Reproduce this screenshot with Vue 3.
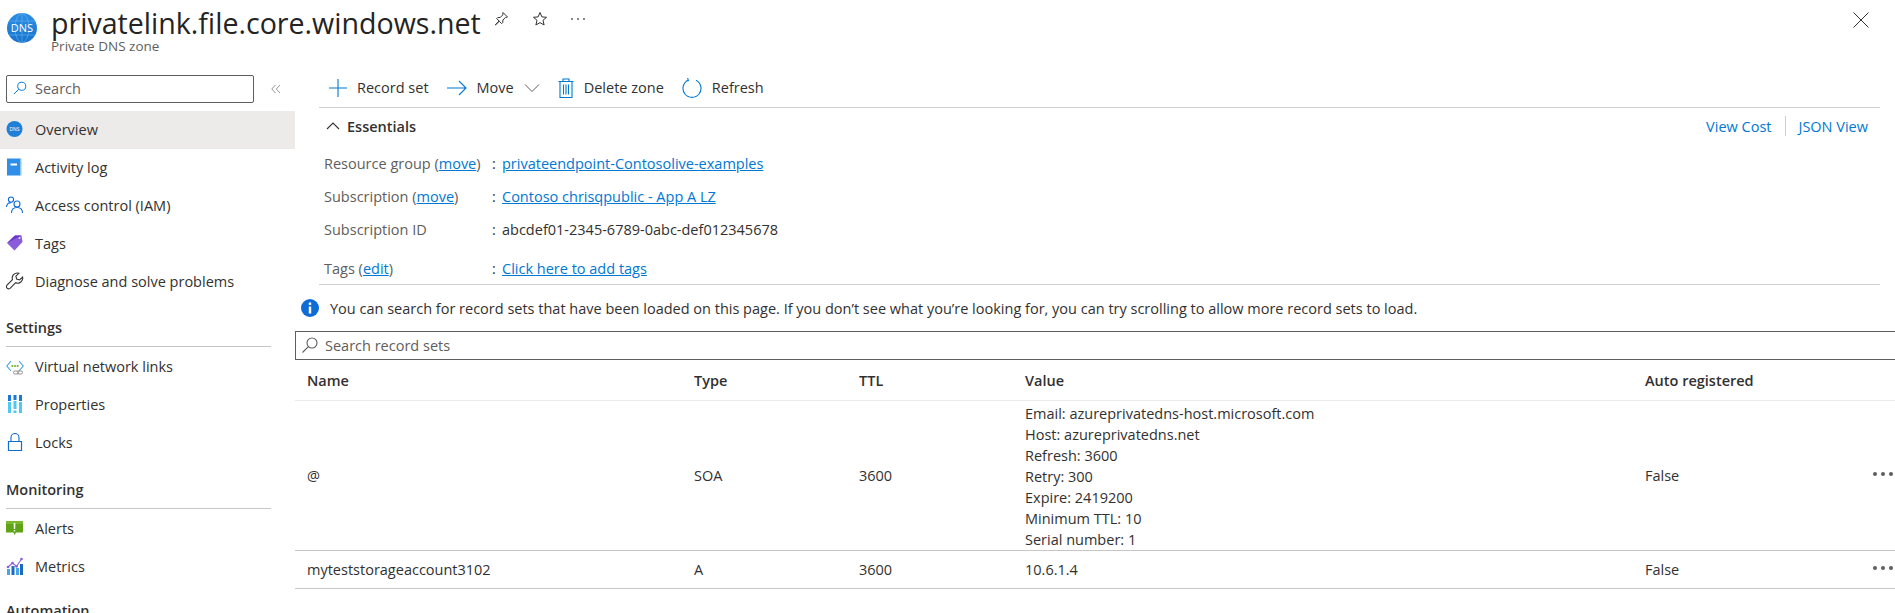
<script setup>
const sections = [
  {
    items: [
      { label: 'Overview', icon: 'dns', active: true },
      { label: 'Activity log', icon: 'log' },
      { label: 'Access control (IAM)', icon: 'iam' },
      { label: 'Tags', icon: 'tag' },
      { label: 'Diagnose and solve problems', icon: 'wrench' },
    ],
  },
  {
    title: 'Settings',
    items: [
      { label: 'Virtual network links', icon: 'vnet' },
      { label: 'Properties', icon: 'props' },
      { label: 'Locks', icon: 'lock' },
    ],
  },
  {
    title: 'Monitoring',
    items: [
      { label: 'Alerts', icon: 'alert' },
      { label: 'Metrics', icon: 'metrics' },
    ],
  },
  { title: 'Automation', items: [] },
];

const essentials = [
  { label: 'Resource group', action: 'move', value: 'privateendpoint-Contosolive-examples', link: true },
  { label: 'Subscription', action: 'move', value: 'Contoso chrisqpublic - App A LZ', link: true },
  { label: 'Subscription ID', value: 'abcdef01-2345-6789-0abc-def012345678' },
  { label: 'Tags', action: 'edit', value: 'Click here to add tags', link: true, tall: true },
];

const records = [
  {
    name: '@',
    type: 'SOA',
    ttl: '3600',
    value: [
      'Email: azureprivatedns-host.microsoft.com',
      'Host: azureprivatedns.net',
      'Refresh: 3600',
      'Retry: 300',
      'Expire: 2419200',
      'Minimum TTL: 10',
      'Serial number: 1',
    ],
    auto: 'False',
  },
  { name: 'myteststorageaccount3102', type: 'A', ttl: '3600', value: ['10.6.1.4'], auto: 'False' },
];
</script>

<template>
  <div class="page">
    <header class="header">
      <svg class="zone-icon" viewBox="0 0 30 30" width="30" height="30">
        <defs>
          <linearGradient id="globe" x1="0" y1="0" x2="0" y2="1">
            <stop offset="0" stop-color="#2b8fe6" />
            <stop offset="1" stop-color="#1673cc" />
          </linearGradient>
        </defs>
        <circle cx="15" cy="15" r="15" fill="url(#globe)" />
        <g fill="none" stroke="#6db4ee" stroke-width="0.6">
          <ellipse cx="15" cy="15" rx="7" ry="14.5" />
          <path d="M2 8h26M2 22h26M15 0.5v29" />
        </g>
        <text x="15" y="19" text-anchor="middle" class="zone-text">DNS</text>
      </svg>
      <div class="heading">
        <h1>privatelink.file.core.windows.net</h1>
        <div class="subtitle">Private DNS zone</div>
      </div>
      <div class="header-actions">
        <svg viewBox="0 0 16 16" width="16" height="16" fill="none" stroke="#323130" stroke-width="1">
          <path d="M10 1.5l4.5 4.5-1 .6-1-.2-2.6 2.6-.2 2.6-1 1-2.4-2.4-4 3.8 3.8-4-2.4-2.4 1-1 2.6-.2 2.6-2.6-.2-1z" />
        </svg>
        <svg viewBox="0 0 16 16" width="16" height="16" fill="none" stroke="#323130" stroke-width="1">
          <path d="M8 1.5l1.9 4.4 4.6.4-3.5 3 1.1 4.7L8 11.6l-4.1 2.4L5 9.3l-3.5-3 4.6-.4z" />
        </svg>
        <span class="dots"><b></b><b></b><b></b></span>
      </div>
      <svg class="close" viewBox="0 0 16 16" width="16" height="16" stroke="#323130" stroke-width="1">
        <path d="M0.5 0.5l15 15M15.5 0.5l-15 15" />
      </svg>
    </header>

    <div class="body">
      <aside class="sidebar">
        <div class="search-row">
          <div class="side-search">
            <svg viewBox="0 0 16 16" width="14" height="14" fill="none" stroke="#0078d4" stroke-width="1.1">
              <circle cx="10" cy="6" r="4.6" />
              <path d="M6.6 9.4L1 15" />
            </svg>
            <span>Search</span>
          </div>
          <svg class="collapse" viewBox="0 0 10 10" width="10" height="10" fill="none" stroke="#8a8886" stroke-width="0.9">
            <path d="M4.5 1L0.8 5l3.7 4M9 1L5.3 5 9 9" />
          </svg>
        </div>

        <section v-for="(section, i) in sections" :key="i" class="side-section">
          <div v-if="section.title" class="side-title">{{ section.title }}</div>
          <div
            v-for="item in section.items"
            :key="item.label"
            class="side-item"
            :class="{ active: item.active, titled: section.title }"
          >
            <span class="side-icon">
              <svg viewBox="0 0 18 18" width="18" height="18">
                <template v-if="item.icon === 'dns'">
                  <circle cx="8.5" cy="9" r="8" fill="#1f80d8" />
                  <text x="8.5" y="11" text-anchor="middle" class="mini-text">DNS</text>
                </template>
                <template v-else-if="item.icon === 'log'">
                  <path d="M1 0.5h13.5v17H1z" fill="#2f8fe8" />
                  <path d="M14 0.5h1.5v17H14z" fill="#8cc8f4" />
                  <path d="M4.5 5.5h6.5v2H4.5z" fill="#fff" />
                </template>
                <template v-else-if="item.icon === 'iam'">
                  <g fill="none" stroke="#0f6cd6" stroke-width="1.1">
                    <circle cx="5" cy="3.6" r="2.6" />
                    <path d="M0.5 11c0-2.6 1.8-4.4 4.5-4.4" />
                    <circle cx="11" cy="8" r="3" />
                    <path d="M5.5 17c0-3.3 2.2-5.5 5.5-5.5s5.5 2.2 5.5 5.5" />
                  </g>
                </template>
                <template v-else-if="item.icon === 'tag'">
                  <path d="M1 9l8-7.5h6.5l1 6.5-8 8.5z" fill="#8a5ed8" />
                  <path d="M1 9l8-7.5h6.5z" fill="#6a35c8" />
                  <circle cx="13.5" cy="4" r="1" fill="#e4d8f8" />
                </template>
                <template v-else-if="item.icon === 'wrench'">
                  <path
                    d="M11 1a5 5 0 0 0-4.5 6.6L1 13.2a2.2 2.2 0 0 0 3.1 3.1l5.6-5.6A5 5 0 0 0 16.6 5l-3 3-3-.9-.7-2.9 3-2.9A5 5 0 0 0 11 1z"
                    fill="none"
                    stroke="#323130"
                    stroke-width="1.1"
                  />
                </template>
                <template v-else-if="item.icon === 'vnet'">
                  <path d="M5 4L0.8 9 5 14M13 4l4.2 5-4.2 5" fill="none" stroke="#3f9fe0" stroke-width="1.1" />
                  <path d="M5.5 9h1.8M8.1 9h1.8M10.7 9h1.8" stroke="#57a300" stroke-width="1.6" />
                  <rect x="7.5" y="14" width="5" height="3" rx="1.4" fill="none" stroke="#8a8886" stroke-width="0.9" />
                  <rect x="11.5" y="14" width="5" height="3" rx="1.4" fill="none" stroke="#8a8886" stroke-width="0.9" />
                </template>
                <template v-else-if="item.icon === 'props'">
                  <path d="M2 0h3v6H2zM7.5 0h3v5h-3zM13 0h3v6h-3z" fill="#1b78d4" />
                  <path d="M2 7h3v11H2zM7.5 6h3v8h-3zM7.5 15.5h3V18h-3zM13 7h3v11h-3z" fill="#50c8f0" />
                </template>
                <template v-else-if="item.icon === 'lock'">
                  <path d="M2.5 8.5h13v9h-13z" fill="none" stroke="#0f6cd6" stroke-width="1.2" />
                  <path d="M5 8.5V4.5a4 4 0 0 1 8 0v4" fill="none" stroke="#0f6cd6" stroke-width="1.1" />
                </template>
                <template v-else-if="item.icon === 'alert'">
                  <path d="M0 2h17v11.5h-7L8.5 16 7.5 13.5H0z" fill="#5ea318" />
                  <path d="M0 2h17v3H0z" fill="#7ab82e" />
                  <path d="M7.6 4h1.8l-.2 6H7.8zM7.8 11h1.4v1.5H7.8z" fill="#f4f8e8" />
                </template>
                <template v-else>
                  <path d="M1 12h3v6H1zM10 11h3v7h-3z" fill="#4aa4e8" />
                  <path d="M5.5 9h3v9h-3zM14 7h3v11h-3z" fill="#1b6cc0" />
                  <path d="M2 10l4.5-4 4 3.5L15.5 2" fill="none" stroke="#8a5ed8" stroke-width="1.1" />
                  <g fill="#8a5ed8">
                    <circle cx="2" cy="10" r="1.3" />
                    <circle cx="6.5" cy="6" r="1.3" />
                    <circle cx="10.5" cy="9.5" r="1.3" />
                    <circle cx="15.5" cy="2" r="1.3" />
                  </g>
                </template>
              </svg>
            </span>
            <span>{{ item.label }}</span>
          </div>
        </section>
      </aside>

      <main class="main">
        <div class="toolbar">
          <div class="tool">
            <svg viewBox="0 0 18 18" width="18" height="18" stroke="#0078d4" stroke-width="1.1"><path d="M9 0v18M0 9h18" /></svg>
            <span>Record set</span>
          </div>
          <div class="tool">
            <svg viewBox="0 0 20 18" width="20" height="18" fill="none" stroke="#0078d4" stroke-width="1.1"><path d="M0 9h19M12 2l7 7-7 7" /></svg>
            <span>Move</span>
            <svg viewBox="0 0 16 10" width="16" height="10" fill="none" stroke="#605e5c"><path d="M1 1.5l7 7 7-7" /></svg>
          </div>
          <div class="tool">
            <svg viewBox="0 0 16 20" width="16" height="20" fill="none" stroke="#0078d4" stroke-width="1.1"><path d="M0.5 3.5h15M5 3.5V1h6v2.5M2 3.5h12v16H2zM5.5 6.5v10M8 6.5v10M10.5 6.5v10" /></svg>
            <span>Delete zone</span>
          </div>
          <div class="tool">
            <svg viewBox="0 0 20 20" width="20" height="20" fill="none" stroke="#0078d4" stroke-width="1.1"><path d="M6 2.3a9 9 0 1 0 8 0M5.6 0L6.4 2.6 3.6 3.2" /></svg>
            <span>Refresh</span>
          </div>
        </div>

        <div class="essentials-head">
          <div class="essentials-title">
            <svg viewBox="0 0 14 8" width="14" height="8" fill="none" stroke="#323130" stroke-width="1.1"><path d="M1 7l6-6 6 6" /></svg>
            <strong>Essentials</strong>
          </div>
          <div class="essentials-links">
            <a>View Cost</a>
            <i></i>
            <a>JSON View</a>
          </div>
        </div>

        <dl class="essentials">
          <div v-for="row in essentials" :key="row.label" class="ess-row" :class="{ tall: row.tall }">
            <dt>
              {{ row.label }}
              <template v-if="row.action">(<u>{{ row.action }}</u>)</template>
            </dt>
            <dd>
              <span class="colon">:</span>
              <u v-if="row.link">{{ row.value }}</u>
              <span v-else class="plain">{{ row.value }}</span>
            </dd>
          </div>
        </dl>

        <div class="info">
          <svg viewBox="0 0 18 18" width="18" height="18">
            <circle cx="9" cy="9" r="9" fill="#0f6cd6" />
            <path d="M7.8 3.6h2.4v2.4H7.8zM7.8 7.4h2.4v7H7.8z" fill="#fff" />
          </svg>
          <span>You can search for record sets that have been loaded on this page. If you don’t see what you’re looking for, you can try scrolling to allow more record sets to load.</span>
        </div>

        <div class="record-search">
          <svg viewBox="0 0 16 16" width="16" height="16" fill="none" stroke="#605e5c" stroke-width="1.1">
            <circle cx="10" cy="6" r="5" />
            <path d="M6.4 9.6L0.5 15.5" />
          </svg>
          <span>Search record sets</span>
        </div>

        <div class="table-row table-head">
          <div>Name</div>
          <div>Type</div>
          <div>TTL</div>
          <div>Value</div>
          <div>Auto registered</div>
          <div></div>
        </div>
        <div v-for="record in records" :key="record.name" class="table-row">
          <div>{{ record.name }}</div>
          <div>{{ record.type }}</div>
          <div>{{ record.ttl }}</div>
          <div :class="{ 'value-lines': record.value.length > 1 }">
            <div v-for="line in record.value" :key="line">{{ line }}</div>
          </div>
          <div>{{ record.auto }}</div>
          <div class="more"><b></b><b></b><b></b></div>
        </div>
      </main>
    </div>
  </div>
</template>

<style>
html,
body {
  margin: 0;
  background: #fff;
  overflow: hidden;
}
</style>

<style scoped>
.page {
  width: 1895px;
  height: 613px;
  overflow: hidden;
  font-family: "Open Sans", "Noto Sans", sans-serif;
  font-size: 14.5px;
  color: #323130;
}
.header {
  display: flex;
  align-items: flex-start;
  height: 68px;
  padding: 13px 26px 0 7px;
  box-sizing: border-box;
}
.zone-icon {
  flex: none;
}
.zone-text {
  font-size: 11px;
  fill: #fff;
}
.mini-text {
  font-size: 5px;
  fill: #fff;
}
.heading {
  margin: -6px 0 0 14px;
}
h1 {
  margin: 0;
  font-size: 28.6px;
  font-weight: 400;
  line-height: 32px;
  color: #252423;
}
.subtitle {
  font-size: 13.5px;
  line-height: 14px;
  color: #605e5c;
}
.header-actions {
  display: flex;
  align-items: center;
  gap: 23px;
  height: 16px;
  margin: -2px 0 0 12px;
}
.dots {
  display: flex;
  gap: 4px;
}
.dots b {
  width: 2px;
  height: 2px;
  border-radius: 50%;
  background: #605e5c;
}
.close {
  margin-left: auto;
  margin-top: -1px;
}
.body {
  display: flex;
}
.sidebar {
  flex: none;
  width: 295px;
}
.search-row {
  display: flex;
  align-items: flex-start;
  height: 43px;
  padding: 7px 0 0 6px;
  box-sizing: border-box;
}
.side-search {
  display: flex;
  align-items: center;
  gap: 8px;
  width: 248px;
  height: 28px;
  padding: 0 0 2px 6px;
  box-sizing: border-box;
  border: 1px solid #605e5c;
  border-radius: 2px;
  color: #605e5c;
}
.collapse {
  margin: 9px 0 0 17px;
}
.side-item {
  display: flex;
  align-items: center;
  height: 38px;
  padding: 0 0 2px 6px;
  box-sizing: border-box;
}
.side-item.titled {
  padding-bottom: 0;
}
.side-item.active {
  background: #edebe9;
}
.side-icon {
  display: flex;
  width: 29px;
}
.side-title {
  margin: 19px 24px 0 6px;
  padding-bottom: 8px;
  border-bottom: 1px solid #c8c6c4;
  font-weight: 600;
  line-height: 20px;
}
.side-section:nth-child(3) .side-title {
  margin-top: 17px;
}
.side-section:last-child .side-title {
  margin-top: 16px;
}
.main {
  flex: 1;
  min-width: 0;
}
.toolbar {
  display: flex;
  align-items: center;
  height: 40px;
  margin: 0 15px 0 24px;
  padding-left: 10px;
  box-sizing: border-box;
  border-bottom: 1px solid #d2d0ce;
  gap: 18px;
}
.tool {
  display: flex;
  align-items: center;
  gap: 10px;
}
.essentials-head {
  display: flex;
  justify-content: space-between;
  align-items: center;
  height: 36px;
  margin: 0 27px 0 31px;
}
.essentials-title {
  display: flex;
  align-items: center;
  gap: 7px;
}
strong {
  font-weight: 600;
}
.essentials-links {
  display: flex;
  align-items: center;
  gap: 13px;
  color: #0078d4;
}
.essentials-links i {
  width: 1px;
  height: 20px;
  background: #d2d0ce;
}
.essentials {
  margin: 0 15px 0 24px;
  padding: 3px 0 0 5px;
  border-bottom: 1px solid #d2d0ce;
}
.ess-row {
  display: flex;
  align-items: center;
  height: 33px;
}
.ess-row.tall {
  height: 38px;
  padding-top: 6px;
  box-sizing: border-box;
}
dt {
  width: 168px;
  color: #605e5c;
}
dt u,
dd u {
  color: #0078d4;
}
dd {
  display: flex;
  margin: 0;
  color: #323130;
}
.colon {
  width: 10px;
}
.info {
  display: flex;
  align-items: center;
  gap: 11px;
  height: 46px;
  padding-left: 6px;
}
.record-search {
  display: flex;
  align-items: center;
  gap: 7px;
  height: 26px;
  padding: 0 0 1px 6px;
  border-top: 1px solid #605e5c;
  border-bottom: 1px solid #605e5c;
  border-left: 1px solid #605e5c;
  color: #605e5c;
}
.table-row {
  display: grid;
  grid-template-columns: 387px 165px 166px 620px 227px 35px;
  align-items: center;
  padding-left: 12px;
  border-bottom: 1px solid #c8c6c4;
  line-height: 21px;
  min-height: 37px;
}
.table-head {
  height: 40px;
  font-weight: 600;
  border-bottom-color: #edebe9;
}
.value-lines {
  padding-top: 2px;
}
.more {
  display: flex;
  gap: 4px;
  height: 4px;
  margin: -4px 0 0 1px;
}
.more b {
  width: 4px;
  height: 4px;
  border-radius: 50%;
  background: #605e5c;
}
</style>
